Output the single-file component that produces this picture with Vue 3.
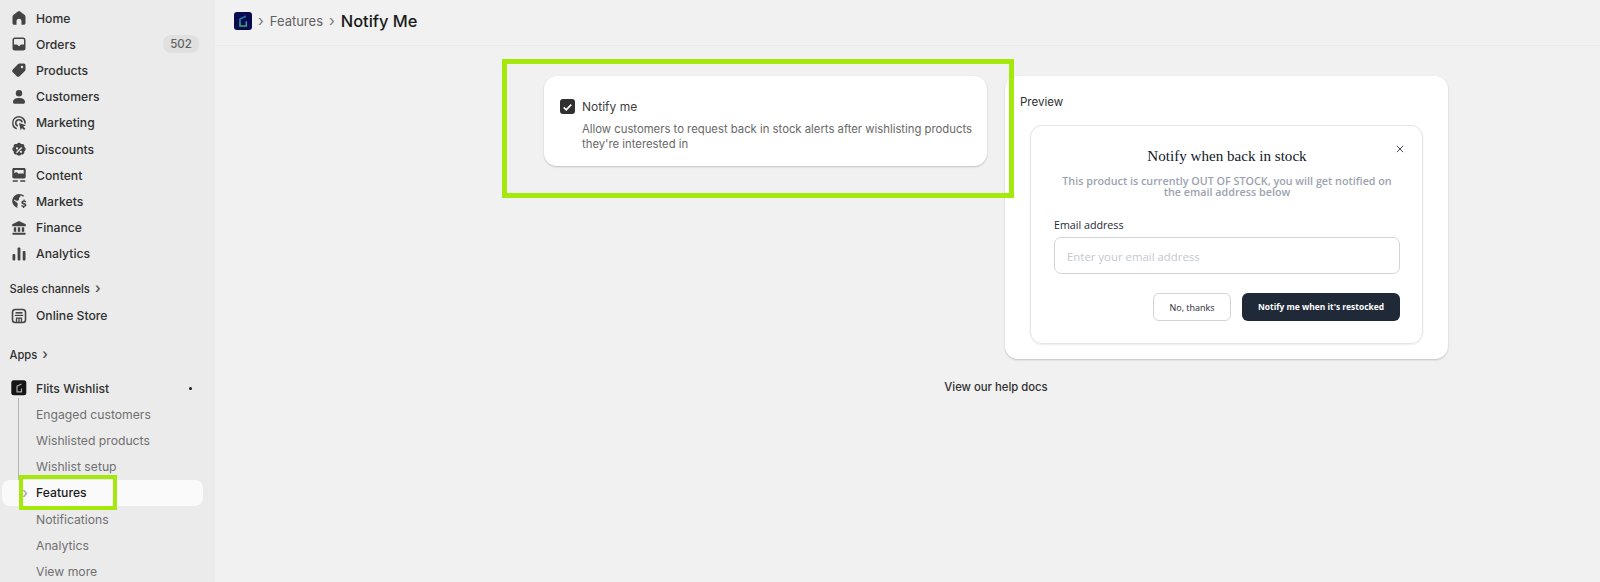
<script setup>
const main = [
  { label: 'Home', icon: 'home' },
  { label: 'Orders', icon: 'orders', badge: '502' },
  { label: 'Products', icon: 'tag' },
  { label: 'Customers', icon: 'person' },
  { label: 'Marketing', icon: 'target' },
  { label: 'Discounts', icon: 'discount' },
  { label: 'Content', icon: 'content' },
  { label: 'Markets', icon: 'globe' },
  { label: 'Finance', icon: 'bank' },
  { label: 'Analytics', icon: 'bars' }
]
const subs = ['Engaged customers', 'Wishlisted products', 'Wishlist setup', 'Features', 'Notifications', 'Analytics', 'View more']
</script>

<template>
  <div class="page">
    <aside class="sidebar">
      <nav class="group">
        <div v-for="item in main" :key="item.label" class="row">
          <svg class="icon" viewBox="0 0 20 20" fill="#444">
            <path v-if="item.icon === 'home'" d="M8.900 3.500a1.800 1.800 0 0 1 2.200 0l4.600 3.600c.5.400.8 1 .8 1.600v6.300c0 1-.8 1.800-1.800 1.800H12.500v-3.600a2.500 2.500 0 0 0-5 0v3.600H5.300c-1 0-1.800-.8-1.800-1.800V8.700c0-.6.300-1.200.8-1.600z" />
            <path v-else-if="item.icon === 'orders'" fill-rule="evenodd" d="M5.800 3.500h8.400c1.300 0 2.300 1 2.300 2.300v8.400c0 1.300-1 2.300-2.300 2.300H5.800c-1.300 0-2.300-1-2.300-2.300V5.800c0-1.300 1-2.300 2.300-2.300zM5 10.500h2.600c.5 0 .9.300 1.100.7.200.5.700.8 1.300.8s1.100-.3 1.300-.8c.2-.4.600-.7 1.100-.7H15V5.800c0-.4-.4-.8-.8-.8H5.800c-.4 0-.8.400-.8.800z" />
            <path v-else-if="item.icon === 'tag'" fill-rule="evenodd" d="M10.600 3.500h4.200c.9 0 1.700.8 1.700 1.700v4.200c0 .6-.2 1.100-.6 1.500l-5.300 5.300c-.8.800-2 .8-2.800 0l-4-4c-.8-.8-.8-2 0-2.800l5.300-5.300c.4-.4.900-.6 1.500-.6zM13 8.200a1.200 1.200 0 1 0 0-2.400 1.200 1.200 0 0 0 0 2.400z" />
            <g v-else-if="item.icon === 'person'">
              <circle cx="10" cy="6.200" r="3.200" />
              <path d="M4 15c0-2.500 2.300-4 6-4s6 1.500 6 4c0 1-.7 1.800-1.800 1.800H5.800C4.700 16.800 4 16 4 15z" />
            </g>
            <g v-else-if="item.icon === 'target'">
              <path d="M10 3a7 7 0 0 0-2.500 13.500l.5-1.500A5.400 5.400 0 1 1 15.200 10.400l1.600.3A7 7 0 0 0 10 3z" />
              <path d="M10 6a4 4 0 0 0-1.300 7.800l.5-1.500a2.400 2.400 0 1 1 3.100-2.900l1.600-.1A4 4 0 0 0 10 6z" />
              <path d="M10 10l7 2.200-2.800 1.400 2.200 2.200-1.300 1.300-2.200-2.200-1.200 2.600z" />
            </g>
            <path v-else-if="item.icon === 'discount'" fill-rule="evenodd" d="M8.700 2.800c.7-.6 1.900-.6 2.600 0l.9.800 1.200-.1c1-.1 1.800.7 1.900 1.700l.1 1.200.8.900c.6.700.6 1.900 0 2.600l-.8.900-.1 1.200c-.1 1-.9 1.800-1.900 1.900l-1.200.1-.9.8c-.7.600-1.900.6-2.600 0l-.9-.8-1.200-.1c-1-.1-1.800-.9-1.900-1.900l-.1-1.200-.8-.9c-.6-.7-.6-1.900 0-2.600l.8-.9.100-1.200c.1-1 .9-1.800 1.900-1.700l1.200.1zM8 9a1.100 1.100 0 1 0 0-2.200A1.100 1.100 0 0 0 8 9zm4 3.400a1.100 1.100 0 1 0 0-2.200 1.100 1.100 0 0 0 0 2.200zM12.200 6.600l-5.200 5.200 1 1 5.200-5.200z" transform="translate(0 1.500)" />
            <g v-else-if="item.icon === 'content'">
              <path fill-rule="evenodd" d="M5 3h10c1 0 1.700.7 1.700 1.700v7c0 1-.7 1.700-1.700 1.700H5c-1 0-1.700-.7-1.700-1.700v-7C3.300 3.700 4 3 5 3zm.3 2v3.200L6.500 7.500c.5-.4 1.200-.4 1.700 0l1.200 1.300c1.500-.2 4-.3 5.300-.1V5z" />
              <rect x="3.500" y="15.200" width="5.500" height="1.600" rx=".8" />
              <rect x="11" y="15.200" width="5.500" height="1.600" rx=".8" />
            </g>
            <g v-else-if="item.icon === 'globe'">
              <path d="M10 3a7 7 0 0 0-1 13.900c-.7-.3-.8-1.200-.8-1.800l.5-.8L8.500 12 5 9.500V8.500l3 1.500 2-1V7l1.500-1.500-.5-1a5 5 0 0 1 3 1.200L15.200 4.800A7 7 0 0 0 10 3z" />
              <path d="M14.500 8.500v1c-1.300.2-2.200 1-2.200 2 0 1.200 1 1.700 2.200 2 .9.200 1.100.4 1.100.7s-.5.600-1.100.6c-.7 0-1.100-.3-1.300-.8l-1.200.5c.3.800 1 1.300 1.900 1.500v1h1.300v-1c1.300-.2 2.200-1 2.200-2 0-1.200-1-1.700-2.200-2-.9-.2-1.100-.4-1.100-.7s.4-.6 1-.6.900.3 1.100.7l1.200-.5c-.3-.8-.9-1.300-1.800-1.400v-1z" />
            </g>
            <g v-else-if="item.icon === 'bank'">
              <path d="M10 3l6.800 3.300v2H3.200v-2z" />
              <rect x="4.800" y="9.300" width="2.400" height="4.500" />
              <rect x="8.800" y="9.300" width="2.400" height="4.500" />
              <rect x="12.800" y="9.300" width="2.400" height="4.500" />
              <rect x="3.500" y="14.800" width="13" height="2" rx=".5" />
            </g>
            <g v-else>
              <rect x="3.500" y="10" width="2.800" height="6.500" rx="1" />
              <rect x="8.600" y="3.500" width="2.800" height="13" rx="1" />
              <rect x="13.700" y="7" width="2.800" height="9.500" rx="1" />
            </g>
          </svg>
          <span class="text">{{ item.label }}</span>
          <span v-if="item.badge" class="badge">{{ item.badge }}</span>
        </div>
      </nav>

      <div class="heading channels">Sales channels <span class="chev">›</span></div>
      <div class="row">
        <svg class="icon" viewBox="0 0 20 20" fill="none" stroke="#444" stroke-width="1.600">
          <rect x="3.500" y="3.500" width="13" height="13" rx="2.800" />
          <path d="M6.500 6.800h7" />
          <path d="M5.800 9.400h8.400" stroke-width="1.300" />
          <path d="M7.500 16v-3.800h5V16M10 12v4" stroke-width="1.300" />
        </svg>
        <span class="text">Online Store</span>
      </div>

      <div class="heading apps">Apps <span class="chev">›</span></div>
      <div class="row app">
        <svg class="icon" viewBox="0 0 20 20">
          <rect x="2.300" y="2.300" width="15" height="15" rx="2.500" fill="#151515" />
          <path d="M12.500 6l-4.500 2.200v5.600h4.500V10.500" fill="none" stroke="#a9a9a9" stroke-width="1.200" />
        </svg>
        <span class="text strong">Flits Wishlist</span>
        <span class="dot"></span>
      </div>
      <div class="subs">
        <span class="tree"></span>
        <div v-for="s in subs" :key="s" class="row sub" :class="{ active: s === 'Features' }">
          <span v-if="s === 'Features'" class="arrow">›</span>
          <span class="text">{{ s }}</span>
        </div>
        <span class="mark-nav"></span>
      </div>
    </aside>

    <main class="main">
      <header class="topbar">
        <svg class="logo" viewBox="0 0 18 18">
          <defs>
            <linearGradient id="logo-grad" x1="0" y1="0" x2="0" y2="1">
              <stop offset="0" stop-color="#1f6fb0" />
              <stop offset="1" stop-color="#3fa878" />
            </linearGradient>
          </defs>
          <rect width="18" height="18" rx="3" fill="#0a0a50" />
          <path d="M12 4.300L6 7v7h6.300V9.300" fill="none" stroke="url(#logo-grad)" stroke-width="1.600" />
        </svg>
        <span class="sep">›</span>
        <span class="crumb">Features</span>
        <span class="sep">›</span>
        <h1 class="title">Notify Me</h1>
      </header>

      <section class="content">
        <div class="columns">
          <div class="left">
            <div class="card notify">
              <span class="check">
                <svg viewBox="0 0 16 16" width="16" height="16"><path d="M4 8.300l2.700 2.700L12 5.400" fill="none" stroke="#fff" stroke-width="1.800" /></svg>
              </span>
              <div class="notify-body">
                <div class="notify-label">Notify me</div>
                <p class="notify-help">Allow customers to request back in stock alerts after wishlisting products they're interested in</p>
              </div>
            </div>
            <span class="mark-card"></span>
          </div>
          <div class="card preview">
            <div class="preview-label">Preview</div>
            <div class="modal">
              <svg class="close" viewBox="0 0 10 10" width="8" height="8"><path d="M1 1l8 8M9 1l-8 8" stroke="#374151" stroke-width="1.200" /></svg>
              <h2 class="modal-title">Notify when back in stock</h2>
              <p class="modal-sub">This product is currently OUT OF STOCK, you will get notified on the email address below</p>
              <div class="field-label">Email address</div>
              <div class="input">Enter your email address</div>
              <div class="actions">
                <button class="btn ghost">No, thanks</button>
                <button class="btn dark">Notify me when it's restocked</button>
              </div>
            </div>
          </div>
        </div>
        <div class="help">View our help docs</div>
      </section>
    </main>
  </div>
</template>

<style>
html, body { margin: 0; background: #f1f1f1; overflow: hidden; }
</style>

<style scoped>
.page {
  display: flex;
  width: 1600px;
  height: 582px;
  overflow: hidden;
  font-family: Inter, "Liberation Sans", sans-serif;
  color: #303030;
}
.sidebar {
  width: 215px;
  flex: none;
  background: #ebebeb;
  padding-top: 5px;
  box-sizing: border-box;
}
.row {
  display: flex;
  align-items: center;
  height: 26.200px;
  padding-left: 9px;
  box-sizing: border-box;
  font-size: 12.200px;
  font-weight: 450;
  color: #303030;
}
.icon { width: 20px; height: 20px; flex: none; margin-right: 7px; }
.badge {
  margin-left: auto;
  margin-right: 16px;
  width: 36px;
  height: 18px;
  border-radius: 8px;
  background: #e0e0e0;
  color: #616161;
  font-size: 11.500px;
  line-height: 18px;
  text-align: center;
}
.heading {
  font-size: 11.200px;
  font-weight: 450;
  color: #303030;
  padding-left: 9.500px;
  height: 16px;
  line-height: 16px;
}
.chev { margin-left: 2px; font-size: 14px; color: #4a4a4a; }
.channels { margin-top: 13px; margin-bottom: 7px; }
.apps { margin-top: 17px; margin-bottom: 13px; }
.strong { color: #303030; }
.dot { width: 3px; height: 3px; border-radius: 50%; background: #1a1a1a; margin-left: auto; margin-right: 23px; }
.subs { position: relative; }
.tree { position: absolute; left: 18px; top: -3px; height: 95px; width: 1px; background: #b5b5b5; }
.sub { padding-left: 36px; color: #707070; font-weight: 400; }
.sub.active {
  position: relative;
  color: #1a1a1a;
  font-weight: 500;
  background: #fafafa;
  border-radius: 8px;
  margin: 0 12px 0 2px;
  padding-left: 34px;
}
.arrow { position: absolute; left: 20px; top: 3px; color: #a8a8a8; font-size: 15px; }
.mark-nav {
  position: absolute;
  left: 19px;
  top: 74px;
  width: 98px;
  height: 35px;
  box-sizing: border-box;
  border: 4px solid #a4e80c;
}

.main { flex: 1; min-width: 0; background: #f1f1f1; }
.topbar {
  height: 46px;
  border-bottom: 1px solid #ebebeb;
  display: flex;
  align-items: center;
  padding: 0 0 4px 19px;
  box-sizing: border-box;
}
.logo { width: 18px; height: 18px; flex: none; }
.sep { color: #7a7a7a; font-size: 15px; margin: 0 6px 0 6px; }
.crumb { font-size: 13px; color: #616161; }
.title { margin: 0; font-size: 16.400px; font-weight: 500; color: #1a1a1a; }

.content { width: 904px; margin: 30px 0 0 329px; }
.columns { display: flex; gap: 18px; align-items: flex-start; }
.left { position: relative; width: 443px; flex: none; }
.card {
  background: #fff;
  border-radius: 13px;
  box-shadow: 0 1px 2px rgba(0, 0, 0, .2);
  box-sizing: border-box;
}
.notify {
  display: flex;
  height: 90px;
  padding: 23px 15px 0 16px;
  gap: 7px;
}
.check {
  width: 15px;
  height: 15px;
  flex: none;
  border-radius: 3px;
  background: #303030;
  display: flex;
  align-items: center;
  justify-content: center;
}
.notify-label { font-size: 12px; line-height: 15px; color: #3f3f3f; font-weight: 400; }
.notify-help { margin: 8px 0 0; font-size: 11.300px; line-height: 15px; color: #686868; }
.mark-card {
  position: absolute;
  left: -42px;
  top: -17px;
  width: 512px;
  height: 139px;
  box-sizing: border-box;
  border: 5px solid #a4e80c;
}

.preview { width: 443px; height: 283px; padding: 19px 25px 0 15px; }
.preview-label { font-size: 11.500px; line-height: 15px; color: #303030; }
.modal {
  position: relative;
  margin: 15px 0 0 10px;
  width: 393px;
  height: 219px;
  border: 1px solid #e3e5e8;
  border-radius: 12px;
  box-shadow: 0 1px 2px rgba(0, 0, 0, .08);
  box-sizing: border-box;
  padding: 20px 22px 0 23px;
}
.close { position: absolute; right: 18px; top: 19px; }
.modal-title {
  margin: 0;
  text-align: center;
  font: 400 15.100px/20px "Liberation Serif", serif;
  color: #111827;
}
.modal-sub {
  margin: 10px 0 0;
  text-align: center;
  font: 600 10.750px/11px "Open Sans", sans-serif;
  color: #9ca3af;
}
.field-label { margin-top: 20px; font: 400 10.700px/15px "Open Sans", sans-serif; color: #1f2937; }
.input {
  margin-top: 4px;
  height: 37px;
  border: 1px solid #d1d5db;
  border-radius: 7px;
  box-sizing: border-box;
  padding: 0 12px;
  font: 400 11.400px/38px "Open Sans", sans-serif;
  color: #c4c8cf;
}
.actions { display: flex; justify-content: flex-end; gap: 11px; margin-top: 19px; }
.btn {
  height: 28px;
  border-radius: 6px;
  font: 400 9px/1 "Open Sans", sans-serif;
  padding: 0;
  box-sizing: border-box;
}
.ghost { width: 78px; background: #fff; border: 1px solid #d1d5db; color: #1f2937; }
.dark { width: 158px; background: #1f2937; border: 0; color: #fff; font-weight: 700; font-size: 8.450px; }
.help { margin-top: 20px; text-align: center; font-size: 11.300px; line-height: 16px; color: #303030; font-weight: 450; }
</style>
